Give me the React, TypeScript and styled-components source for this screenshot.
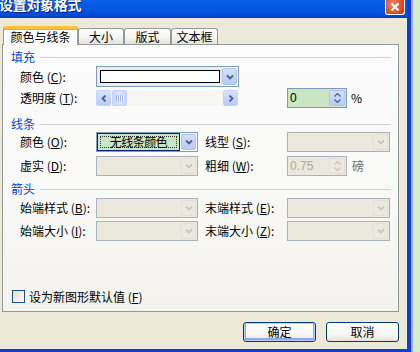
import React from "react";
import styled, { createGlobalStyle, css } from "styled-components";

const Global = createGlobalStyle`
  html, body { margin: 0; padding: 0; }
  body {
    width: 420px; height: 352px; overflow: hidden;
    font-family: "Noto Sans CJK SC", "Liberation Sans", sans-serif;
    font-size: 12px; color: #000;
  }
  * { box-sizing: border-box; }
`;

const Screen = styled.div`
  display: flex;
  width: 420px;
  height: 352px;
  overflow: hidden;
`;

const Backdrop = styled.div`
  flex: 1;
  background: #d5ebd2;
  border-left: 2px solid #aab4ab;
`;

const Window = styled.div`
  width: 411px;
  height: 352px;
  display: flex;
  flex-direction: column;
  border-right: 4px solid #0b3fd8;
  border-bottom: 3px solid #0b3fd8;
`;

const TitleBar = styled.div`
  height: 18px;
  display: flex;
  align-items: flex-start;
  justify-content: space-between;
  background: linear-gradient(#0b60ea, #0656e2 60%, #0046cf);
  border-bottom: 1px solid #0a3bbf;
  overflow: hidden;
`;

const TitleText = styled.div`
  color: #fff;
  font-weight: bold;
  font-size: 14px;
  line-height: 14px;
  margin-top: -3px;
  margin-left: -1px;
  letter-spacing: -0.3px;
  text-shadow: 1px 1px #0a1f8a;
`;

const CloseBtn = styled.div`
  width: 20px;
  height: 15px;
  margin-right: 2px;
  border: 1px solid #fff;
  border-top: none;
  border-radius: 0 0 3px 3px;
  background: radial-gradient(circle at 40% 30%, #f08a6a, #d9451f 70%, #c23a14);
  display: flex;
  align-items: center;
  justify-content: center;
`;

const Body = styled.div`
  flex: 1;
  background: #ece9d8;
  display: flex;
  flex-direction: column;
  padding: 8px 8px 0 2px;
`;

const Tabs = styled.div`
  display: flex;
  align-items: flex-end;
  height: 19px;
  padding-left: 1px;
  margin-bottom: -1px;
  position: relative;
  z-index: 1;
`;

const Tab = styled.div<{ $w: number; $active?: boolean }>`
  width: ${(p) => p.$w}px;
  height: 16px;
  margin-bottom: 1px;
  border: 1px solid #919b9c;
  border-bottom: none;
  border-radius: 3px 3px 0 0;
  background: linear-gradient(#ffffff, #f3f3ef 60%, #e3e2dc);
  display: flex;
  align-items: center;
  justify-content: center;
  line-height: 14px;
  white-space: nowrap;
  ${(p) =>
    p.$active &&
    css`
      height: 19px;
      margin-bottom: 0;
      border-top: 3px solid #ffc13c;
      box-shadow: inset 0 1px 0 #f5a623;
      background: #fcfcfe;
      padding-bottom: 1px;
    `}
`;

const Panel = styled.div`
  width: 397px;
  height: 268px;
  border: 1px solid #919b9c;
  background: linear-gradient(#fcfcfe, #f9f9f7 50%, #f3f2ed);
  display: flex;
  flex-direction: column;
`;

const GroupHeader = styled.div<{ $mt: number }>`
  display: flex;
  align-items: center;
  height: 14px;
  margin-top: ${(p) => p.$mt}px;
  padding: 0 7px 0 8px;
`;

const GroupLabel = styled.span`
  color: #0046d5;
  line-height: 14px;
`;

const GroupLine = styled.div`
  flex: 1;
  height: 1px;
  margin-left: 5px;
  background: #d4d3c8;
`;

const Row = styled.div<{ $mt: number; $h?: number }>`
  display: flex;
  align-items: center;
  height: ${(p) => p.$h ?? 20}px;
  margin-top: ${(p) => p.$mt}px;
  padding-left: 17px;
`;

const Label = styled.span<{ $w?: number; $ml?: number }>`
  width: ${(p) => p.$w ?? 76}px;
  margin-left: ${(p) => p.$ml ?? 0}px;
  flex-shrink: 0;
  white-space: nowrap;
  line-height: 14px;
`;

const Combo = styled.div<{ $w: number; $h?: number; $disabled?: boolean }>`
  width: ${(p) => p.$w}px;
  height: ${(p) => p.$h ?? 20}px;
  border: 1px solid ${(p) => (p.$disabled ? "#a9b3c0" : "#7f9db9")};
  background: ${(p) => (p.$disabled ? "#ebe9dc" : "#ffffff")};
  display: flex;
  align-items: stretch;
  flex-shrink: 0;
`;

const SwatchArea = styled.div`
  flex: 1;
  padding: 3px 2px 3px 3px;
  background: #e9efe6;
  display: flex;
`;

const Swatch = styled.div`
  flex: 1;
  border: 1px solid #000;
  background: #fff;
`;

const Field = styled.div`
  flex: 1;
`;

const DropBtn = styled.div<{ $disabled?: boolean }>`
  width: 15px;
  margin: 1px 1px 1px 0;
  border-radius: 2px;
  display: flex;
  align-items: center;
  justify-content: center;
  ${(p) =>
    p.$disabled
      ? css`
          background: #eceae0;
          border: 1px solid #e2e0d6;
        `
      : css`
          background: linear-gradient(#d3e0fd, #b7cbf6);
          border: 1px solid #b0c4f2;
        `}
`;

const ColorBtn = styled.div`
  flex: 1;
  border: 1px solid #0a246a;
  margin: 0 1px 0 0;
  background: #c8e6c5;
  display: flex;
  padding: 2px;
`;

const FocusRect = styled.div`
  flex: 1;
  border: 1px dotted #333;
  display: flex;
  align-items: center;
  justify-content: center;
  line-height: 12px;
  letter-spacing: -0.5px;
`;

const ScrollBar = styled.div`
  width: 142px;
  height: 16px;
  display: flex;
  background: #f7f6f2;
  flex-shrink: 0;
`;

const ScrollBtn = styled.div`
  width: 15px;
  height: 16px;
  border: 1px solid #c4d3f7;
  border-radius: 2px;
  background: linear-gradient(#d5e1fd, #bacdf7);
  display: flex;
  align-items: center;
  justify-content: center;
`;

const Thumb = styled.div`
  width: 15px;
  height: 16px;
  margin-left: 1px;
  border: 1px solid #c4d3f7;
  border-radius: 2px;
  background: linear-gradient(90deg, #c9d8fc, #d9e4fd 50%, #c3d3fa);
  display: flex;
  align-items: center;
  justify-content: center;
  gap: 1px;
`;

const Grip = styled.div`
  width: 1px;
  height: 6px;
  background: #9fb5ec;
  box-shadow: 1px 0 0 #eef3ff;
`;

const Track = styled.div`
  flex: 1;
`;

const Spin = styled.div<{ $ml: number; $disabled?: boolean }>`
  width: 60px;
  height: 20px;
  margin-left: ${(p) => p.$ml}px;
  border: 1px solid ${(p) => (p.$disabled ? "#a9b3c0" : "#7f9db9")};
  display: flex;
  flex-shrink: 0;
  background: ${(p) => (p.$disabled ? "#ebe9dc" : "#c8e6c3")};
  color: ${(p) => (p.$disabled ? "#aca899" : "#000")};
`;

const SpinValue = styled.div`
  flex: 1;
  padding-left: 2px;
  display: flex;
  align-items: center;
  line-height: 12px;
  font-family: "Liberation Sans", "Noto Sans CJK SC", sans-serif;
`;

const SpinBtns = styled.div<{ $disabled?: boolean }>`
  width: 16px;
  margin: 1px;
  border-radius: 2px;
  display: flex;
  flex-direction: column;
  align-items: center;
  justify-content: center;
  gap: 2px;
  background: ${(p) =>
    p.$disabled ? "#eceae0" : "linear-gradient(#d5e1fd, #b7cbf6)"};
  border: 1px solid ${(p) => (p.$disabled ? "#e2e0d6" : "#b0c4f2")};
`;

const Unit = styled.span<{ $ml: number; $muted?: boolean }>`
  margin-left: ${(p) => p.$ml}px;
  color: ${(p) => (p.$muted ? "#6f6d62" : "#000")};
  line-height: 14px;
`;

const Spacer = styled.div`
  flex: 1;
`;

const CheckRow = styled.div`
  display: flex;
  align-items: center;
  height: 13px;
  margin-bottom: 8px;
  padding-left: 9px;
`;

const CheckBox = styled.div`
  width: 13px;
  height: 13px;
  border: 1px solid #1c5180;
  background: linear-gradient(135deg, #dcdcd7, #ffffff);
  margin-right: 4px;
`;

const CheckText = styled.span`
  line-height: 13px;
  white-space: nowrap;
`;

const Buttons = styled.div`
  display: flex;
  justify-content: flex-end;
  gap: 10px;
  margin-top: 10px;
`;

const Button = styled.div<{ $default?: boolean }>`
  width: 73px;
  height: 20px;
  border: 1px solid #003c74;
  border-radius: 3px;
  background: linear-gradient(#ffffff, #f4f4f0 70%, #e3e0d6);
  display: flex;
  align-items: center;
  justify-content: center;
  line-height: 12px;
  ${(p) =>
    p.$default &&
    css`
      box-shadow: inset 0 0 0 1px #b9d1fa, inset 0 -1px 0 2px #91a7f0;
    `}
`;

const Chevron = ({ dir, color }: { dir: "down" | "up" | "left" | "right"; color: string }) => {
  const paths: Record<string, string> = {
    down: "M1 1.5 L4 4.5 L7 1.5",
    up: "M1 4.5 L4 1.5 L7 4.5",
    left: "M4.5 0.5 L1.5 3.5 L4.5 6.5",
    right: "M1.5 0.5 L4.5 3.5 L1.5 6.5",
  };
  const horiz = dir === "left" || dir === "right";
  return (
    <svg width={horiz ? 6 : 8} height={horiz ? 7 : 6} viewBox={horiz ? "0 0 6 7" : "0 0 8 6"}>
      <path d={paths[dir]} fill="none" stroke={color} strokeWidth={1.8} />
    </svg>
  );
};

const SmallArrow = ({ up, color }: { up?: boolean; color: string }) => (
  <svg width="7" height="4" viewBox="0 0 7 4">
    <path d={up ? "M0.5 3.5 L3.5 0.5 L6.5 3.5" : "M0.5 0.5 L3.5 3.5 L6.5 0.5"} fill="none" stroke={color} strokeWidth={1.3} />
  </svg>
);

const ACTIVE = "#4d6185";
const MUTED = "#c9c7bc";

const DisabledCombo = ({ w }: { w: number }) => (
  <Combo $w={w} $disabled>
    <Field />
    <DropBtn $disabled>
      <Chevron dir="down" color={MUTED} />
    </DropBtn>
  </Combo>
);

export default function App() {
  return (
    <>
      <Global />
      <Screen>
        <Window>
          <TitleBar>
            <TitleText>设置对象格式</TitleText>
            <CloseBtn>
              <svg width="10" height="10" viewBox="0 0 10 10">
                <path d="M1.5 1.5 L8.5 8.5 M8.5 1.5 L1.5 8.5" stroke="#fff" strokeWidth="2" />
              </svg>
            </CloseBtn>
          </TitleBar>
          <Body>
            <Tabs>
              <Tab $w={75} $active>颜色与线条</Tab>
              <Tab $w={46}>大小</Tab>
              <Tab $w={47}>版式</Tab>
              <Tab $w={47}>文本框</Tab>
            </Tabs>
            <Panel>
              <GroupHeader $mt={5}>
                <GroupLabel>填充</GroupLabel>
                <GroupLine />
              </GroupHeader>
              <Row $mt={2} $h={21}>
                <Label>颜色 (<u>C</u>):</Label>
                <Combo $w={143} $h={21}>
                  <SwatchArea>
                    <Swatch />
                  </SwatchArea>
                  <DropBtn>
                    <Chevron dir="down" color={ACTIVE} />
                  </DropBtn>
                </Combo>
              </Row>
              <Row $mt={1}>
                <Label>透明度 (<u>T</u>):</Label>
                <ScrollBar>
                  <ScrollBtn>
                    <Chevron dir="left" color={ACTIVE} />
                  </ScrollBtn>
                  <Thumb>
                    <Grip />
                    <Grip />
                    <Grip />
                    <Grip />
                  </Thumb>
                  <Track />
                  <ScrollBtn>
                    <Chevron dir="right" color={ACTIVE} />
                  </ScrollBtn>
                </ScrollBar>
                <Spin $ml={49}>
                  <SpinValue>0</SpinValue>
                  <SpinBtns>
                    <SmallArrow up color={ACTIVE} />
                    <SmallArrow color={ACTIVE} />
                  </SpinBtns>
                </Spin>
                <Unit $ml={4}>%</Unit>
              </Row>

              <GroupHeader $mt={9}>
                <GroupLabel>线条</GroupLabel>
                <GroupLine />
              </GroupHeader>
              <Row $mt={1}>
                <Label>颜色 (<u>O</u>):</Label>
                <Combo $w={102}>
                  <ColorBtn>
                    <FocusRect>无线条颜色</FocusRect>
                  </ColorBtn>
                  <DropBtn>
                    <Chevron dir="down" color={ACTIVE} />
                  </DropBtn>
                </Combo>
                <Label $w={82} $ml={7}>线型 (<u>S</u>):</Label>
                <DisabledCombo w={103} />
              </Row>
              <Row $mt={4}>
                <Label>虚实 (<u>D</u>):</Label>
                <DisabledCombo w={102} />
                <Label $w={82} $ml={7}>粗细 (<u>W</u>):</Label>
                <Spin $ml={0} $disabled>
                  <SpinValue>0.75</SpinValue>
                  <SpinBtns $disabled>
                    <SmallArrow up color={MUTED} />
                    <SmallArrow color={MUTED} />
                  </SpinBtns>
                </Spin>
                <Unit $ml={5} $muted>磅</Unit>
              </Row>

              <GroupHeader $mt={6}>
                <GroupLabel>箭头</GroupLabel>
                <GroupLine />
              </GroupHeader>
              <Row $mt={2}>
                <Label>始端样式 (<u>B</u>):</Label>
                <DisabledCombo w={102} />
                <Label $w={82} $ml={7}>末端样式 (<u>E</u>):</Label>
                <DisabledCombo w={103} />
              </Row>
              <Row $mt={3}>
                <Label>始端大小 (<u>I</u>):</Label>
                <DisabledCombo w={102} />
                <Label $w={82} $ml={7}>末端大小 (<u>Z</u>):</Label>
                <DisabledCombo w={103} />
              </Row>

              <Spacer />
              <CheckRow>
                <CheckBox />
                <CheckText>设为新图形默认值 (<u>F</u>)</CheckText>
              </CheckRow>
            </Panel>
            <Buttons>
              <Button $default>确定</Button>
              <Button>取消</Button>
            </Buttons>
          </Body>
        </Window>
        <Backdrop />
      </Screen>
    </>
  );
}
